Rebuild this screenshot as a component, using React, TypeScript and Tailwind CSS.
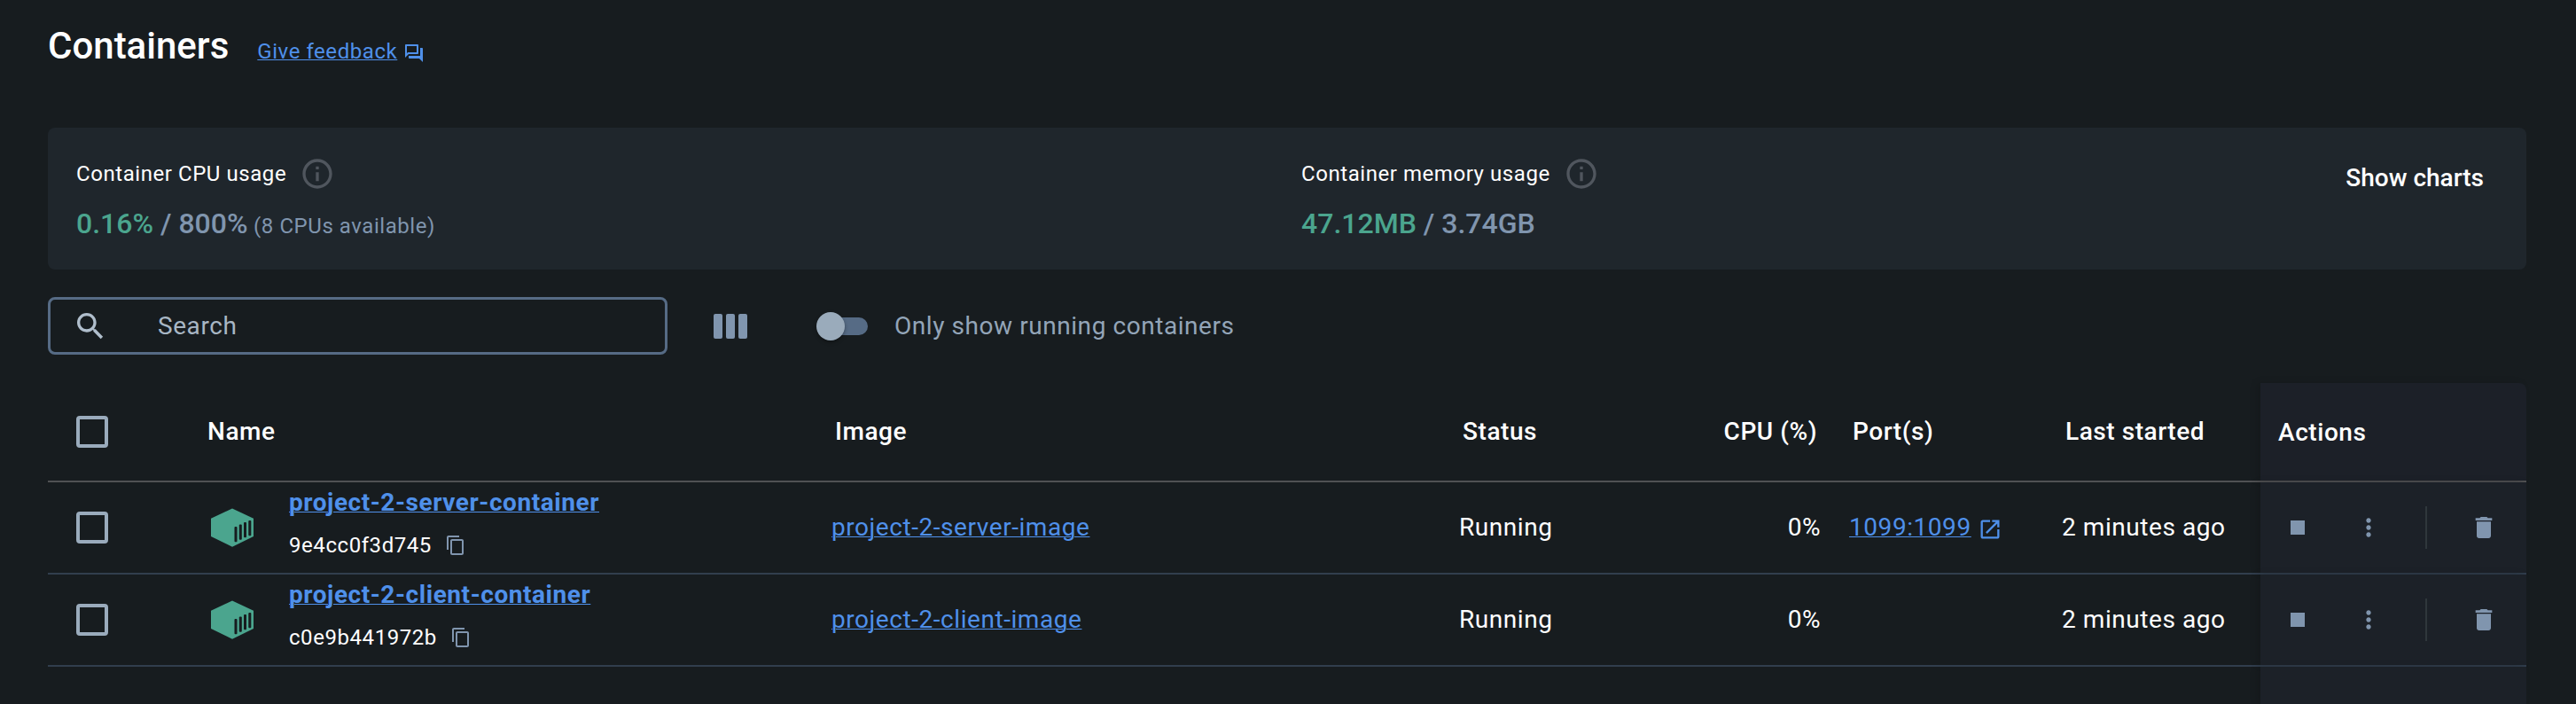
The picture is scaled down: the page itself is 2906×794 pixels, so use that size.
import type { ReactNode } from "react";

type Container = {
  name: string;
  id: string;
  image: string;
  status: string;
  cpu: string;
  port?: string;
  started: string;
};

const containers: Container[] = [
  {
    name: "project-2-server-container",
    id: "9e4cc0f3d745",
    image: "project-2-server-image",
    status: "Running",
    cpu: "0%",
    port: "1099:1099",
    started: "2 minutes ago",
  },
  {
    name: "project-2-client-container",
    id: "c0e9b441972b",
    image: "project-2-client-image",
    status: "Running",
    cpu: "0%",
    started: "2 minutes ago",
  },
];

const rowGrid =
  "grid grid-cols-[168px_708px_707px_293px_148px_239px_233px_300px] items-stretch";

function Icon({ d, className }: { d: string; className: string }) {
  return (
    <svg viewBox="0 0 24 24" fill="currentColor" className={`shrink-0 ${className}`}>
      <path d={d} />
    </svg>
  );
}

const paths = {
  feedback:
    "M15 4v7H5.17l-.59.59-.58.58V4h11m1-2H3c-.55 0-1 .45-1 1v14l4-4h10c.55 0 1-.45 1-1V3c0-.55-.45-1-1-1zm5 4h-2v9H6v2c0 .55.45 1 1 1h11l4 4V7c0-.55-.45-1-1-1z",
  info: "M11 7h2v2h-2V7zm0 4h2v6h-2v-6zm1-9C6.48 2 2 6.48 2 12s4.48 10 10 10 10-4.48 10-10S17.52 2 12 2zm0 18c-4.41 0-8-3.59-8-8s3.59-8 8-8 8 3.59 8 8-3.59 8-8 8z",
  search:
    "M15.5 14h-.79l-.28-.27C15.41 12.59 16 11.11 16 9.5 16 5.91 13.09 3 9.5 3S3 5.91 3 9.5 5.91 16 9.5 16c1.61 0 3.09-.59 4.23-1.57l.27.28v.79l5 4.99L20.49 19l-4.99-5zm-6 0C7.01 14 5 11.99 5 9.5S7.01 5 9.5 5 14 7.01 14 9.5 11.99 14 9.5 14z",
  copy: "M16 1H4c-1.1 0-2 .9-2 2v14h2V3h12V1zm3 4H8c-1.1 0-2 .9-2 2v14c0 1.1.9 2 2 2h11c1.1 0 2-.9 2-2V7c0-1.1-.9-2-2-2zm0 16H8V7h11v14z",
  open: "M19 19H5V5h7V3H5c-1.11 0-2 .9-2 2v14c0 1.1.89 2 2 2h14c1.1 0 2-.9 2-2v-7h-2v7zM14 3v2h3.59l-9.83 9.83 1.41 1.41L19 6.41V10h2V3h-7z",
  more: "M12 8c1.1 0 2-.9 2-2s-.9-2-2-2-2 .9-2 2 .9 2 2 2zm0 2c-1.1 0-2 .9-2 2s.9 2 2 2 2-.9 2-2-.9-2-2-2zm0 6c-1.1 0-2 .9-2 2s.9 2 2 2 2-.9 2-2-.9-2-2-2z",
  trash:
    "M6 19c0 1.1.9 2 2 2h8c1.1 0 2-.9 2-2V7H6v12zM19 4h-3.5l-1-1h-5l-1 1H5v2h14V4z",
};

function Cube() {
  return (
    <svg viewBox="0 0 48 44" className="h-11 w-12 shrink-0">
      <path d="M24 .5 48 11.7V32L24 43.7 0 32V11.7Z" fill="#4ba58e" />
      <g fill="#171c1f">
        <rect x="26.5" y="21" width="3" height="17.3" rx="1" />
        <rect x="31.8" y="18.4" width="3" height="17.3" rx="1" />
        <rect x="37" y="16" width="3" height="17.3" rx="1" />
        <rect x="42.3" y="14" width="3" height="17.3" rx="1" />
      </g>
    </svg>
  );
}

function Checkbox() {
  return (
    <div className="flex items-center pl-8">
      <div className="size-9 rounded-[4px] border-4 border-[#9aabbc]" />
    </div>
  );
}

function Link({ children, className = "" }: { children: ReactNode; className?: string }) {
  return (
    <a
      className={`text-[#4f90ea] underline decoration-1 underline-offset-[1px] ${className}`}
    >
      {children}
    </a>
  );
}

function Usage({ label, children }: { label: string; children: ReactNode }) {
  return (
    <div>
      <div className="flex h-10 items-center gap-[15px]">
        <span className="text-2xl leading-7 text-white">{label}</span>
        <Icon d={paths.info} className="size-10 text-[#50565e]" />
      </div>
      <div className="mt-[17px] text-[32px] leading-[38px] font-medium tracking-normal text-[#8095ae]">
        {children}
      </div>
    </div>
  );
}

function HeaderRow() {
  return (
    <div
      className={`${rowGrid} h-28 border-b-2 border-[#505153] text-[28px] leading-[33px] font-medium text-white`}
    >
      <Checkbox />
      <div className="flex items-center pb-px pl-3">Name</div>
      <div className="flex items-center pb-px pl-3">Image</div>
      <div className="flex items-center pb-px pl-[13px]">Status</div>
      <div className="flex items-center justify-end pr-[28px] pb-px">CPU (%)</div>
      <div className="flex items-center pb-px pl-3">Port(s)</div>
      <div className="flex items-center pb-px pl-[13px]">Last started</div>
      <div className="flex items-center rounded-tr-lg bg-[#1c2028] pt-px pl-5 shadow-[-4px_0_8px_rgba(0,0,0,0.12)]">
        Actions
      </div>
    </div>
  );
}

function ContainerRow({ item }: { item: Container }) {
  return (
    <div
      className={`${rowGrid} h-[104px] border-b-2 border-[#313e4d] text-[28px] leading-[33px] text-white`}
    >
      <Checkbox />
      <div className="flex items-start pl-4">
        <div className="flex h-full items-center">
          <Cube />
        </div>
        <div className="ml-10 pt-1.5">
          <Link className="block font-bold">{item.name}</Link>
          <div className="mt-[18px] flex items-center gap-[15px] text-2xl leading-7">
            <span>{item.id}</span>
            <Icon d={paths.copy} className="size-6 text-[#8095ae]" />
          </div>
        </div>
      </div>
      <div className="flex items-center pb-px pl-2">
        <Link>{item.image}</Link>
      </div>
      <div className="flex items-center pb-px pl-[9px]">{item.status}</div>
      <div className="flex items-center justify-end pr-6 pb-px">{item.cpu}</div>
      <div className="flex items-center pb-px pl-2">
        {item.port && (
          <>
            <Link>{item.port}</Link>
            <Icon d={paths.open} className="mt-[5px] ml-[7px] size-7 text-[#4f90ea]" />
          </>
        )}
      </div>
      <div className="flex items-center pb-px pl-[9px]">{item.started}</div>
      <div className="flex items-center bg-[#1c2128] pl-[29px] text-[#8095ae] shadow-[-4px_0_8px_rgba(0,0,0,0.12)]">
        <div className="flex size-[26px] items-center justify-center">
          <div className="size-4 bg-[#8095ae]" />
        </div>
        <Icon d={paths.more} className="ml-[51px] size-8" />
        <div className="ml-12 h-12 w-0.5 bg-[#2f373c]" />
        <Icon d={paths.trash} className="ml-12 size-8" />
      </div>
    </div>
  );
}

export default function App() {
  return (
    <div className="flex h-[794px] w-[2906px] flex-col overflow-hidden bg-[#171c1f] pr-14 pl-[54px] font-['Roboto',sans-serif] tracking-[0.56px]">
      <header className="flex h-36 shrink-0 items-baseline pt-[27px]">
        <h1 className="text-[42px] leading-[49px] font-medium tracking-normal text-white">
          Containers
        </h1>
        <div className="ml-8 flex items-center gap-[7px] text-2xl leading-7">
          <Link>Give feedback</Link>
          <Icon d={paths.feedback} className="mt-1 size-6 text-[#4f90ea]" />
        </div>
      </header>

      <section className="grid h-40 w-[2796px] shrink-0 grid-cols-[1382px_1fr_auto] rounded-lg bg-[#1f262c] pt-8 pr-12 pl-8">
        <Usage label="Container CPU usage">
          <span className="text-[#4ba58e]">0.16%</span> / 800%
          <span className="text-2xl font-normal tracking-[0.56px]"> (8 CPUs available)</span>
        </Usage>
        <Usage label="Container memory usage">
          <span className="text-[#4ba58e]">47.12MB</span> / 3.74GB
        </Usage>
        <button className="mt-2 h-[33px] text-[28px] leading-[33px] font-medium tracking-normal text-white">
          Show charts
        </button>
      </section>

      <section className="mt-[31px] flex h-[65px] shrink-0 items-center text-[28px] leading-[33px]">
        <div className="flex h-[65px] w-[699px] items-center rounded-lg border-3 border-[#566b85] pl-[25px] text-[#a8b6c4]">
          <Icon d={paths.search} className="mt-px size-10 text-[#b0becc]" />
          <span className="ml-14">Search</span>
        </div>
        <div className="mt-px ml-[52px] flex h-7 gap-1">
          <div className="w-2.5 rounded-[2px] bg-[#8095ae]" />
          <div className="w-2.5 rounded-[2px] bg-[#8095ae]" />
          <div className="w-2.5 rounded-[2px] bg-[#8095ae]" />
        </div>
        <div className="mt-px ml-[78px] flex h-8 w-[58px] items-center">
          <div className="relative size-8 shrink-0 rounded-full bg-[#9aabbb] shadow-[0_2px_4px_rgba(0,0,0,0.35)]" />
          <div className="-ml-4 h-5 w-[42px] shrink-0 rounded-r-full bg-[#566b85]" />
        </div>
        <span className="ml-[30px] text-[#93a5b8]">Only show running containers</span>
      </section>

      <section className="mt-8 flex w-[2796px] grow flex-col">
        <HeaderRow />
        {containers.map((item) => (
          <ContainerRow key={item.id} item={item} />
        ))}
        <div className="flex grow justify-end">
          <div className="w-[300px] bg-[#1c2128] shadow-[-4px_0_8px_rgba(0,0,0,0.12)]" />
        </div>
      </section>
    </div>
  );
}
